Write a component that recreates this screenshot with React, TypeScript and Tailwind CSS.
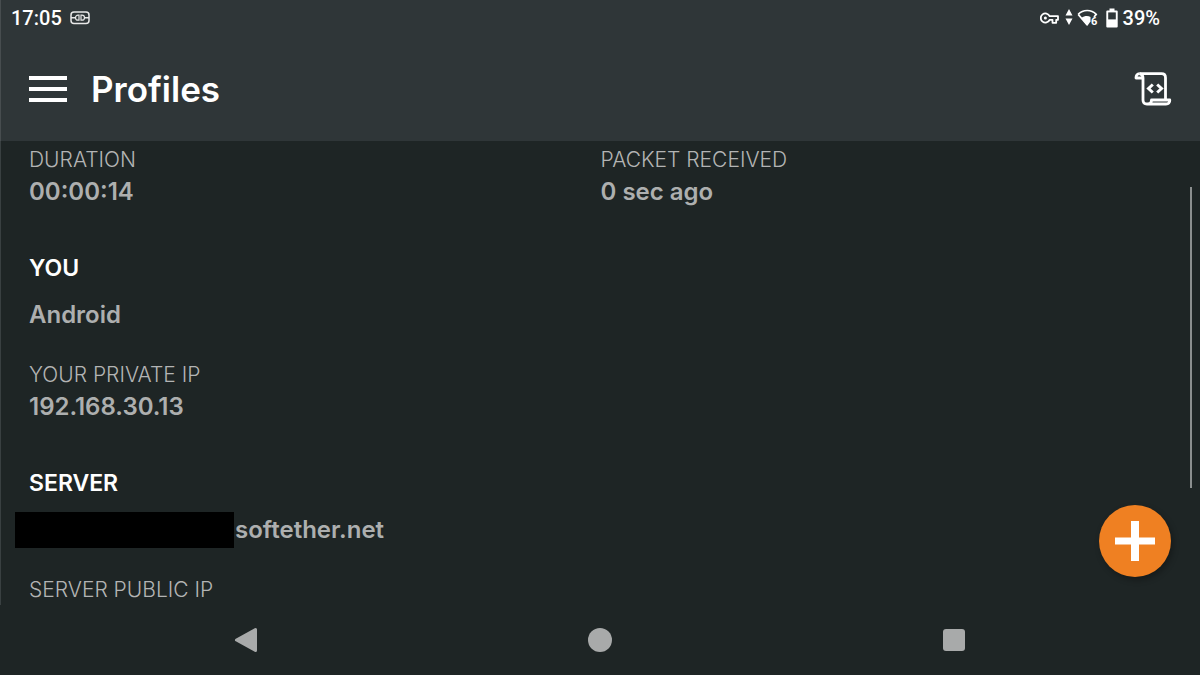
import type { ReactNode } from "react"

type FieldProps = {
  label: string
  value?: string
}

const Field = ({ label, value }: FieldProps) => (
  <div>
    <dt className="text-[21px] leading-8 font-light text-[#b3b4b4]">{label}</dt>
    {value && (
      <dd className="text-[24px] leading-8 font-semibold text-[#adafaf]">{value}</dd>
    )}
  </div>
)

const SectionTitle = ({ children }: { children: ReactNode }) => (
  <h2 className="mt-11 text-[23px] leading-8 font-semibold text-white">{children}</h2>
)

const VpnIcon = () => (
  <svg width="20" height="14" viewBox="0 0 20 14" fill="none" stroke="#e8e8e8" strokeWidth="1.5">
    <rect x="1" y="1" width="18" height="11.5" rx="3" />
    <path d="M1 6.7h4M15 6.7h4" />
    <path d="M9 4.2H8A2.5 2.5 0 0 0 8 9.2h1zM11 4.2h1a2.5 2.5 0 0 1 0 5h-1z" strokeWidth="1.2" />
  </svg>
)

const KeyIcon = () => (
  <svg width="19" height="12" viewBox="0 0 19 12" fill="none" stroke="#fff" strokeWidth="1.8">
    <path d="M9.6 4.2A4.6 4.6 0 1 0 9.6 7.8H12.5V10.8H16.2V7.8H18V4.2Z" strokeLinejoin="round" />
    <circle cx="5.4" cy="6" r="1.5" fill="#fff" stroke="none" />
  </svg>
)

const TrafficIcon = () => (
  <svg width="8" height="18" viewBox="0 0 8 18" fill="#fff">
    <path d="M4 0 7.500 6.500H.5ZM4 16 .5 9.500H7.500Z" />
  </svg>
)

const WifiIcon = () => (
  <svg width="21" height="18" viewBox="0 0 21 18">
    <path d="M1.2 5.4C6 .2 14.4.2 19.2 5.4L17 8M1.2 5.4 10.2 16" fill="none" stroke="#fff" strokeWidth="1.7" />
    <path d="M4.4 9C7.6 6.600 11 6.600 13.500 8v4.5L10.2 17Z" fill="#fff" />
    <text x="14" y="16" fill="#fff" fontSize="11" fontWeight="700" fontFamily="Roboto, sans-serif">6</text>
  </svg>
)

const BatteryIcon = () => (
  <svg width="12" height="20" viewBox="0 0 12 20">
    <path d="M3.5 0.5h5v2h2.2q1 0 1 1v15q0 1-1 1H1.3q-1 0-1-1v-15q0-1 1-1h2.2z" fill="#fff" />
    <path d="M2.2 4.4h7.6v7H2.2z" fill="#2f3638" />
  </svg>
)

const MenuIcon = () => (
  <svg width="38" height="26" viewBox="0 0 38 26" fill="#fff">
    <path d="M0 0h38v4H0zM0 11h38v4H0zM0 22h38v4H0z" />
  </svg>
)

const ScriptIcon = () => (
  <svg width="38" height="34" viewBox="0 0 38 34" fill="none" stroke="#fff" strokeWidth="2.8" strokeLinejoin="round">
    <path d="M5.500 1.700H27.500Q31.500 1.700 31.500 5.700V27.500" />
    <path d="M5.500 1.700Q2 1.700 2 6H9" />
    <path d="M5.500 1.700Q9 2.500 9 6V28Q9 32 13 32H32Q35.800 32 35.800 28H17.500Q17.500 32 14 32" />
    <path d="M18.800 12.500 14.500 16.500 18.800 20.500M23.200 12.500 27.500 16.500 23.200 20.500" strokeWidth="3" strokeLinejoin="miter" />
  </svg>
)

const StatusBar = () => (
  <div className="flex h-9 items-center justify-between pr-10 pl-2.5 font-[Roboto,sans-serif] text-[20px] font-medium text-white">
    <div className="flex items-center gap-2">
      <span>17:05</span>
      <VpnIcon />
    </div>
    <div className="flex items-center">
      <KeyIcon />
      <div className="ml-1.5">
        <TrafficIcon />
      </div>
      <div className="ml-1">
        <WifiIcon />
      </div>
      <div className="ml-2">
        <BatteryIcon />
      </div>
      <span className="ml-[5px]">39%</span>
    </div>
  </div>
)

const NavigationBar = () => (
  <nav className="grid h-[70px] shrink-0 grid-cols-3 place-items-center px-[69px]">
    <button type="button" aria-label="Back">
      <svg width="24" height="26" viewBox="0 0 24 26" fill="#a8aaaa" stroke="#a8aaaa" strokeWidth="3" strokeLinejoin="round">
        <path d="M2.500 13 21.500 2.500V23.500Z" />
      </svg>
    </button>
    <button type="button" aria-label="Home" className="size-6 rounded-full bg-[#a8aaaa]" />
    <button type="button" aria-label="Overview" className="size-[22px] rounded-[3px] bg-[#a8aaaa]" />
  </nav>
)

const App = () => {
  return (
    <div className="flex h-screen flex-col overflow-hidden bg-[#1e2525] font-[Inter,sans-serif]">
      <header className="shrink-0 border-l border-[#474d4f] bg-[#2f3638]">
        <StatusBar />
        <div className="flex h-[105px] items-center px-7">
          <button type="button" aria-label="Open menu">
            <MenuIcon />
          </button>
          <h1 className="ml-6 text-[35px] leading-10 font-semibold text-white">Profiles</h1>
          <button type="button" aria-label="View log" className="ml-auto">
            <ScriptIcon />
          </button>
        </div>
      </header>

      <div className="relative min-h-0 flex-1">
        <main className="h-full overflow-hidden border-l border-[#394041] px-7 pt-[3px]">
          <dl className="grid grid-cols-2">
            <Field label="DURATION" value="00:00:14" />
            <Field label="PACKET RECEIVED" value="0 sec ago" />
          </dl>

          <SectionTitle>YOU</SectionTitle>
          <p className="mt-[15px] text-[24px] leading-8 font-semibold text-[#adafaf]">Android</p>
          <dl className="mt-7">
            <Field label="YOUR PRIVATE IP" value="192.168.30.13" />
          </dl>

          <SectionTitle>SERVER</SectionTitle>
          {/* Host name, first part hidden */}
          <p className="-ml-3.5 mt-[15px] flex h-8 items-center text-[24px] leading-8 font-semibold text-[#adafaf]">
            <span className="mr-px h-9 w-[219px] bg-black" />
            softether.net
          </p>
          <dl className="mt-7">
            <Field label="SERVER PUBLIC IP" />
          </dl>
        </main>

        {/* Scroll position */}
        <div className="absolute top-[46px] right-2 h-[301px] w-0.5 bg-[#8b8f8f]" />

        <button
          type="button"
          aria-label="Add profile"
          className="absolute right-[29px] bottom-7 flex size-[72px] items-center justify-center rounded-full bg-[#ef8022] shadow-[2px_3px_6px_rgba(0,0,0,0.3)]"
        >
          <svg width="40" height="40" viewBox="0 0 40 40" fill="#fff">
            <path d="M16 0h8v16.500h16v7H24V40h-8V23.500H0v-7h16z" />
          </svg>
        </button>
      </div>

      <NavigationBar />
    </div>
  )
}

export default App
